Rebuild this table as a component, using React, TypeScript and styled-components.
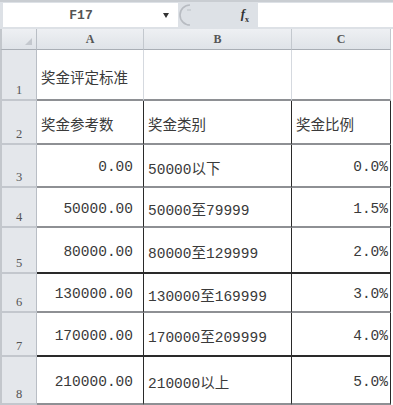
import React from "react";
import styled, { createGlobalStyle } from "styled-components";

const GlobalStyle = createGlobalStyle`
  html, body { margin: 0; padding: 0; background: #ffffff; overflow: hidden; }
  * { box-sizing: border-box; }
`;

const Frame = styled.div`
  width: 393px;
  height: 405px;
  display: flex;
  flex-direction: column;
  background: #ffffff;
  overflow: hidden;
`;

const FormulaBar = styled.div`
  height: 29px;
  display: flex;
  align-items: stretch;
  background: #dde1e6;
  border-top: 2px solid #c9cdd2;
  padding: 1px 0 2px 0;
`;

const NameBox = styled.div`
  width: 175px;
  margin-left: 3px;
  background: #ffffff;
  display: flex;
  align-items: center;
  font-family: "Liberation Mono", monospace;
  font-weight: bold;
  font-size: 13px;
  color: #555;
`;

const NameText = styled.span`
  flex: 1;
  text-align: center;
  padding-right: 4px;
`;

const DropArrow = styled.span`
  width: 0;
  height: 0;
  border-left: 3.5px solid transparent;
  border-right: 3.5px solid transparent;
  border-top: 5px solid #333;
  margin-right: 9px;
`;

const Tools = styled.div`
  width: 77px;
  display: flex;
  align-items: center;
  justify-content: space-between;
  padding: 0 6px 0 0;
`;

const Fx = styled.span`
  font-family: "Liberation Serif", serif;
  font-style: italic;
  font-weight: bold;
  font-size: 13px;
  color: #333;
  sub { font-size: 8px; font-style: normal; }
`;

const FormulaInput = styled.div`
  flex: 1;
  background: #ffffff;
  margin-left: 3px;
`;

const Sheet = styled.div`
  flex: 1;
  display: grid;
  grid-template-columns: 37px 107px 148px 99px 2px;
  grid-template-rows: 21px 51px 44px 43px 40px 46px 39px 44px 48px;
  background: #ffffff;
`;

const Corner = styled.div`
  background: linear-gradient(#eef0f3, #dfe3e8);
  border-right: 1px solid #b9bec5;
  border-bottom: 1px solid #a9aeb5;
  border-left: 2px solid #c3c7cc;
  position: relative;
  &::after {
    content: "";
    position: absolute;
    right: 4px;
    bottom: 4px;
    width: 0;
    height: 0;
    border-left: 7px solid transparent;
    border-bottom: 7px solid #c4c8ce;
  }
`;

const ColHeader = styled.div`
  background: linear-gradient(#eef0f3, #dfe3e8);
  border-right: 1px solid #c3c8ce;
  border-bottom: 1px solid #a9aeb5;
  display: flex;
  align-items: center;
  justify-content: center;
  font-family: "Liberation Serif", serif;
  font-weight: bold;
  font-size: 12px;
  color: #555;
`;

const RowHeader = styled.div`
  background: #e4e7eb;
  border-left: 2px solid #c3c7cc;
  border-right: 1px solid #b9bec5;
  border-bottom: 2px solid #c3c7cd;
  display: flex;
  align-items: flex-end;
  justify-content: center;
  padding-bottom: 1px;
  font-family: "Liberation Serif", serif;
  font-size: 12.5px;
  color: #555;
`;

type Line = "light" | "grey" | "dark";
const lineColor = (l: Line) =>
  l === "dark" ? "#2a2a2a" : l === "grey" ? "#8e9094" : "#d5d9df";

const Cell = styled.div<{ $align?: "left" | "right"; $right: Line; $bottom: Line }>`
  display: flex;
  align-items: center;
  justify-content: ${(p) => (p.$align === "right" ? "flex-end" : "flex-start")};
  padding: ${(p) => (p.$align === "right" ? "3px 10px 0 4px" : "3px 3px 0 4px")};
  border-right: 1px solid ${(p) => lineColor(p.$right)};
  border-bottom: ${(p) => (p.$bottom === "light" ? "1px" : "2px")} solid
    ${(p) => lineColor(p.$bottom)};
  font-family: "Liberation Mono", "Noto Sans CJK SC", monospace;
  font-size: 14.5px;
  color: #3a3a3a;
  white-space: nowrap;
  overflow: hidden;
`;

const PctCell = styled(Cell)`
  padding-right: 2px;
`;

const Filler = styled.div`
  background: #ffffff;
`;

type Row = {
  n: number;
  a: string;
  aRight: boolean;
  b: string;
  c: string;
  cRight: boolean;
  bottom: Line;
  inner: Line;
};

const rows: Row[] = [
  { n: 1, a: "奖金评定标准", aRight: false, b: "", c: "", cRight: false, bottom: "grey", inner: "light" },
  { n: 2, a: "奖金参考数", aRight: false, b: "奖金类别", c: "奖金比例", cRight: false, bottom: "grey", inner: "dark" },
  { n: 3, a: "0.00", aRight: true, b: "50000以下", c: "0.0%", cRight: true, bottom: "grey", inner: "dark" },
  { n: 4, a: "50000.00", aRight: true, b: "50000至79999", c: "1.5%", cRight: true, bottom: "grey", inner: "dark" },
  { n: 5, a: "80000.00", aRight: true, b: "80000至129999", c: "2.0%", cRight: true, bottom: "dark", inner: "dark" },
  { n: 6, a: "130000.00", aRight: true, b: "130000至169999", c: "3.0%", cRight: true, bottom: "grey", inner: "dark" },
  { n: 7, a: "170000.00", aRight: true, b: "170000至209999", c: "4.0%", cRight: true, bottom: "dark", inner: "dark" },
  { n: 8, a: "210000.00", aRight: true, b: "210000以上", c: "5.0%", cRight: true, bottom: "grey", inner: "dark" },
];

const Arc = () => (
  <svg width="16" height="24" viewBox="0 0 16 24" aria-hidden>
    <path d="M12 2 A10 10 0 0 0 12 22" fill="none" stroke="#b8bcc2" strokeWidth="1.6" />
    <path d="M9 7 H13" stroke="#c2c6cb" strokeWidth="1.2" />
  </svg>
);

export default function App() {
  return (
    <Frame>
      <GlobalStyle />
      <FormulaBar>
        <NameBox>
          <NameText>F17</NameText>
          <DropArrow />
        </NameBox>
        <Tools>
          <Arc />
          <Fx>
            f<sub>x</sub>
          </Fx>
        </Tools>
        <FormulaInput />
      </FormulaBar>
      <Sheet>
        <Corner />
        <ColHeader>A</ColHeader>
        <ColHeader>B</ColHeader>
        <ColHeader>C</ColHeader>
        <Filler />
        {rows.map((r) => (
          <React.Fragment key={r.n}>
            <RowHeader>{r.n}</RowHeader>
            <Cell $align={r.aRight ? "right" : "left"} $right={r.inner} $bottom={r.bottom}>
              {r.a}
            </Cell>
            <Cell $align="left" $right={r.inner} $bottom={r.bottom}>
              {r.b}
            </Cell>
            <PctCell $align={r.cRight ? "right" : "left"} $right={r.inner} $bottom={r.bottom}>
              {r.c}
            </PctCell>
            <Filler />
          </React.Fragment>
        ))}
      </Sheet>
    </Frame>
  );
}
